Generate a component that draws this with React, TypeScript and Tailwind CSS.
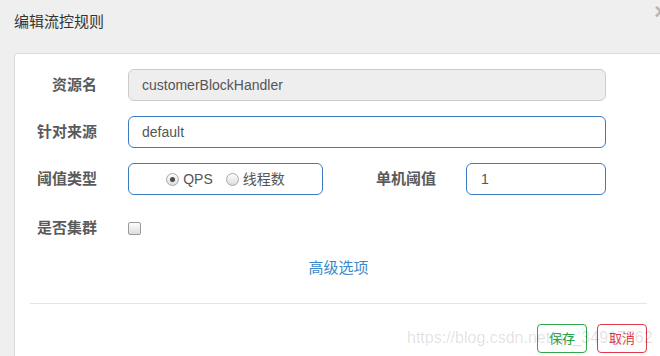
import { useState } from 'react';

const font = "font-['Liberation_Sans','Noto_Sans_CJK_SC',sans-serif]";

function Radio({ checked, label, onClick }: { checked: boolean; label: string; onClick: () => void }) {
  return (
    <label className="flex items-center gap-[4px] cursor-pointer" onClick={onClick}>
      <span className="w-[13px] h-[13px] rounded-full border border-[#a9a9a9] bg-gradient-to-b from-[#fdfdfd] to-[#dcdcdc] flex items-center justify-center">
        {checked && <span className="w-[5px] h-[5px] rounded-full bg-[#4a4a4a]" />}
      </span>
      <span className="text-[14px] text-[#555]">{label}</span>
    </label>
  );
}

export default function App() {
  const [grade, setGrade] = useState<'qps' | 'thread'>('qps');
  const [cluster, setCluster] = useState(false);

  const label = 'text-[15px] font-bold text-[#5a5a5a] text-right leading-[20px]';
  const input = 'h-[32px] rounded-[6px] px-[13px] text-[14px] text-[#555] flex items-center';

  return (
    <div className={`relative w-[660px] h-[356px] overflow-hidden bg-[#efefef] ${font}`}>
      <div className="h-[53px] pl-[14px] pt-[12px]">
        <h4 className="text-[15px] leading-[20px] text-[#333]">编辑流控规则</h4>
      </div>
      <span className="absolute right-[-7px] top-[1px] text-[22px] leading-[22px] font-bold text-[#b5b5b5]">×</span>

      <div className="ml-[14px] w-[660px] h-[303px] bg-white border-l border-t border-[#dcdcdc] rounded-tl-[4px] pl-[15px] pt-[15px]">
        <div className="flex items-center h-[32px]">
          <div className={`w-[67px] ${label}`}>资源名</div>
          <div className={`ml-[31px] w-[478px] bg-[#eeeeee] border border-[#cccccc] ${input}`}>customerBlockHandler</div>
        </div>

        <div className="flex items-center h-[32px] mt-[15px]">
          <div className={`w-[67px] ${label}`}>针对来源</div>
          <div className={`ml-[31px] w-[478px] bg-white border border-[#3a7cbf] ${input}`}>default</div>
        </div>

        <div className="flex items-center h-[32px] mt-[15px]">
          <div className={`w-[67px] ${label}`}>阈值类型</div>
          <div className="ml-[31px] w-[195px] h-[32px] rounded-[6px] border border-[#3a7cbf] flex items-center justify-center gap-[13px]">
            <Radio checked={grade === 'qps'} label="QPS" onClick={() => setGrade('qps')} />
            <Radio checked={grade === 'thread'} label="线程数" onClick={() => setGrade('thread')} />
          </div>
          <div className={`w-[113px] ${label}`}>单机阈值</div>
          <div className={`ml-[30px] w-[140px] bg-white border border-[#3a7cbf] ${input} pl-[14px]`}>1</div>
        </div>

        <div className="flex items-center h-[32px] mt-[17px]">
          <div className={`w-[67px] ${label}`}>是否集群</div>
          <span
            onClick={() => setCluster(!cluster)}
            className="ml-[31px] w-[13px] h-[13px] rounded-[2px] border border-[#9a9a9a] bg-gradient-to-b from-[#fdfdfd] to-[#dddddd] cursor-pointer"
          />
        </div>

        <div className="w-[617px] mt-[14px] text-center text-[15px] leading-[20px] text-[#3c87cc]">高级选项</div>

        <div className="w-[617px] h-px bg-[#e5e5e5] mt-[25px]" />

        <div className="w-[617px] mt-[20px] flex justify-end gap-[10px]">
          <button className="w-[50px] h-[29px] rounded-[4px] border border-[#2ea84a] text-[#2ea84a] text-[13px] bg-white">保存</button>
          <button className="w-[50px] h-[29px] rounded-[4px] border border-[#e03a48] text-[#e03a48] text-[13px] bg-white">取消</button>
        </div>
      </div>

      <div className="absolute left-[407px] top-[328px] text-[16px] leading-[20px] text-black/[0.13] pointer-events-none whitespace-nowrap">
        https://blog.csdn.net/qq_34917762
      </div>
    </div>
  );
}
